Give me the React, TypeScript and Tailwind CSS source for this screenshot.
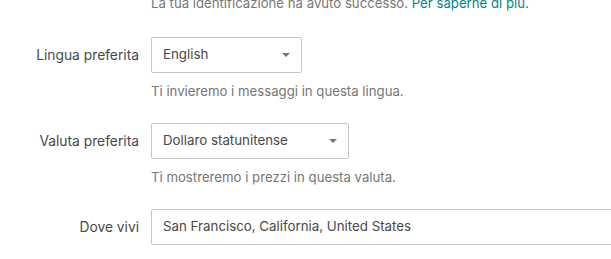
export default function App() {
    return (
        <div className="w-[611px] h-[259px] overflow-hidden bg-white font-['Inter',sans-serif] text-[#484848]">
            <div className="pl-[151px] -mt-[6px] text-[13.2px] leading-[18px] text-[#767676] whitespace-nowrap">
                La tua identificazione ha avuto successo. <span className="text-[#008489]">Per saperne di più.</span>
            </div>
            <div className="mt-[25px] flex flex-col gap-[22px]">
                <Row label="Lingua preferita" value="English" width="w-[151px]" select help="Ti invieremo i messaggi in questa lingua." />
                <Row label="Valuta preferita" value="Dollaro statunitense" width="w-[198px]" select help="Ti mostreremo i prezzi in questa valuta." />
                <Row label="Dove vivi" value="San Francisco, California, United States" width="w-[480px]" />
            </div>
        </div>
    );
}

function Row({ label, value, width, select, help }: { label: string; value: string; width: string; select?: boolean; help?: string }) {
    return (
        <div className="flex">
            <div className="w-[139px] shrink-0 text-right text-[13.8px] leading-[36px]">{label}</div>
            <div className="ml-[12px] shrink-0">
                <div className={`${width} h-[36px] border border-[#c4c4c4] rounded-[2px] flex items-center justify-between pl-[11px] pr-[11px]`}>
                    <span className="text-[13.3px] text-[#484848] whitespace-nowrap">{value}</span>
                    {select && (
                        <svg width="8" height="4" viewBox="0 0 8 4">
                            <path d="M0 0 L8 0 L4 4 Z" fill="#767676" />
                        </svg>
                    )}
                </div>
                {help && <div className="mt-[9px] mb-[1px] text-[13.2px] leading-[18px] text-[#767676] whitespace-nowrap">{help}</div>}
            </div>
        </div>
    );
}
